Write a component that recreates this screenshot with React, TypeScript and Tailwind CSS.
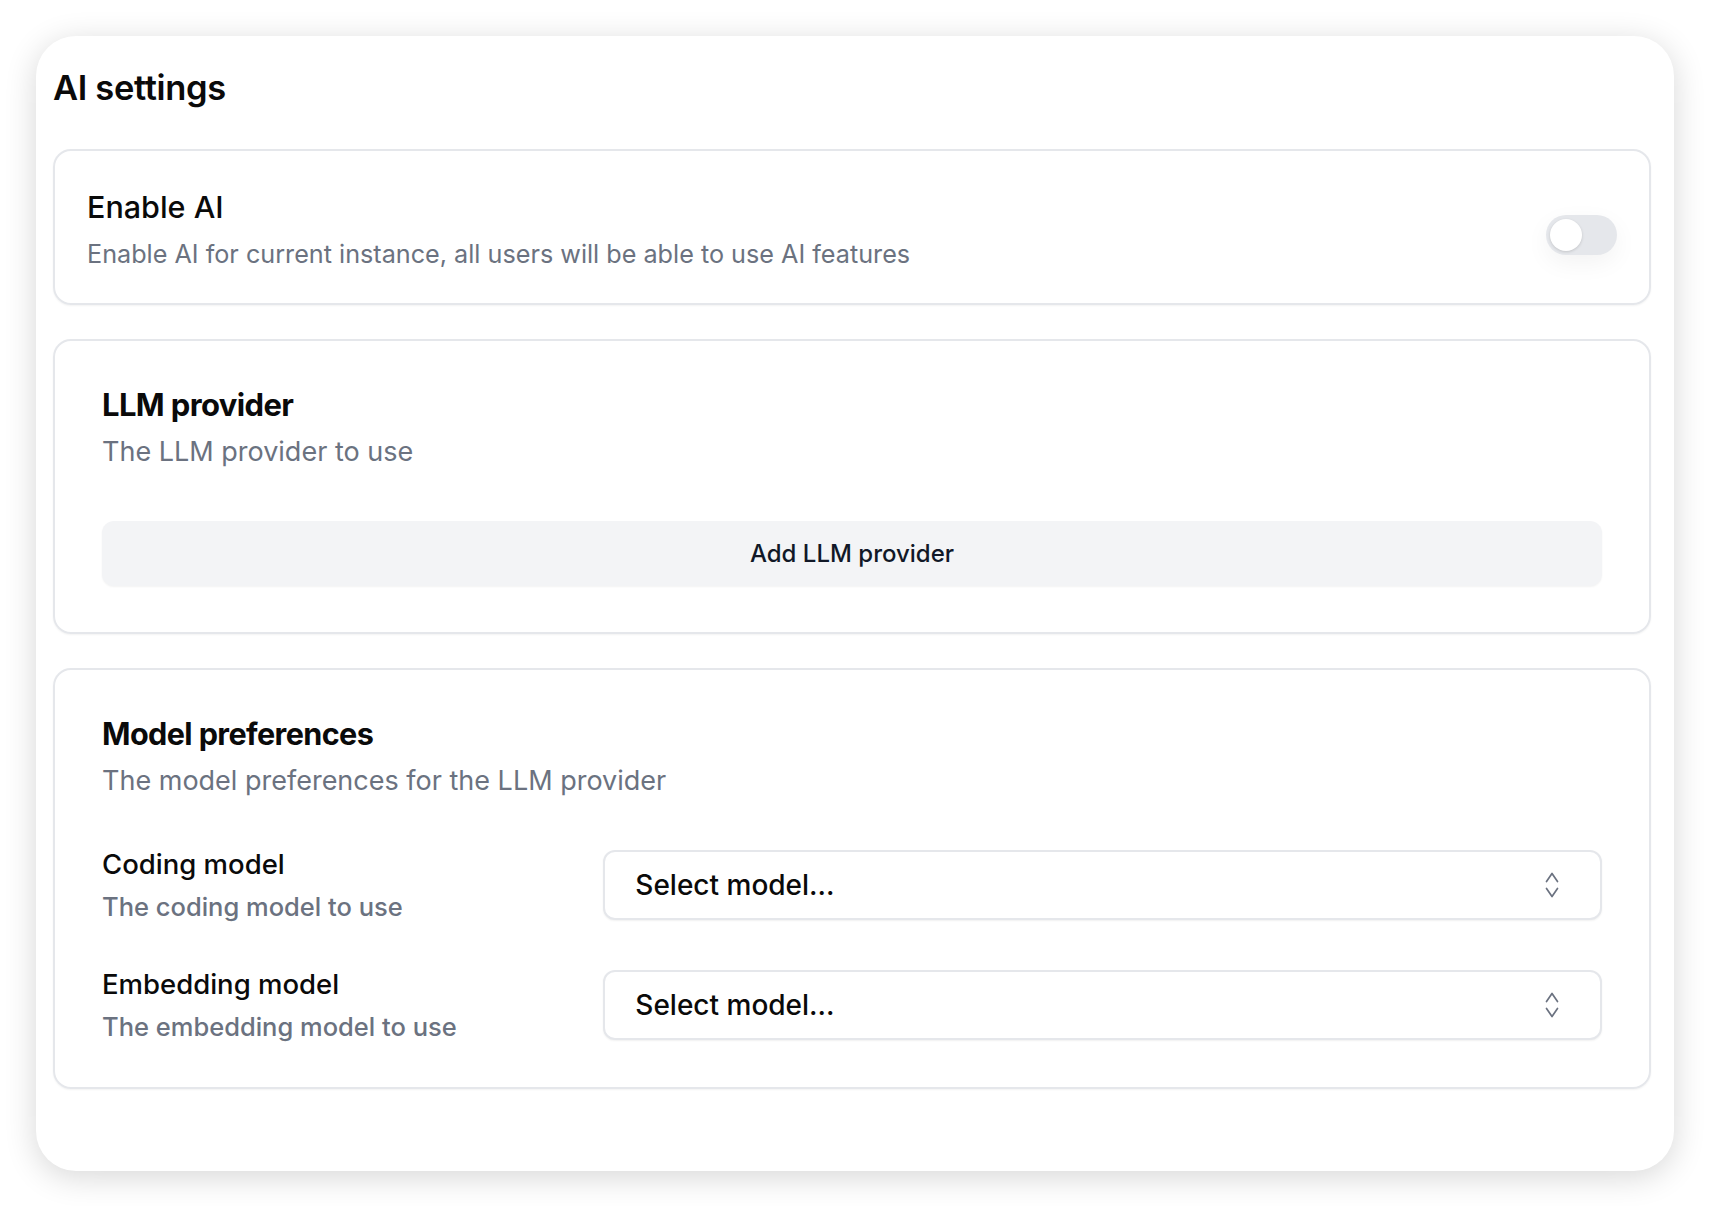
import React from "react";

function UpDown() {
    return (
        <svg width="16" height="28" viewBox="0 0 16 28" fill="none" stroke="#6b7280" strokeWidth="1.7" strokeLinecap="round" strokeLinejoin="round">
            <polyline points="2.5,10.5 8,2.5 13.5,10.5" />
            <polyline points="2.5,17.5 8,25.5 13.5,17.5" />
        </svg>
    );
}

function ModelRow({ label, hint }: { label: string; hint: string }) {
    return (
        <div className="grid grid-cols-3 gap-1 items-start">
            <div className="flex flex-col">
                <div className="text-[27.5px] leading-[28px] font-medium text-[#0a0a0a]">{label}</div>
                <div className="text-[25.5px] leading-[26px] font-medium text-[#6b7280] mt-[16px]">{hint}</div>
            </div>
            <button className="col-span-2 h-[70px] flex items-center justify-between pl-[30px] pr-[40px] bg-white border-2 border-[#e5e7eb] rounded-[12px] shadow-[0_1px_2px_rgba(0,0,0,0.06)]">
                <span className="text-[28px] font-medium text-[#0a0a0a]">Select model...</span>
                <UpDown />
            </button>
        </div>
    );
}

export default function App() {
    return (
        <div className="min-h-screen bg-white p-[36px] font-['Inter',sans-serif]">
            <div className="bg-white rounded-[40px] shadow-[0_6px_32px_rgba(0,0,0,0.16)] pl-[17px] pr-[23px] pt-[28px] pb-[82px]">
                <h1 className="text-[34.5px] leading-[48px] font-semibold text-[#0a0a0a] tracking-[-0.01em]">AI settings</h1>

                <div className="mt-[37px] flex flex-col gap-[34px]">
                    {/* Enable */}
                    <div className="border-2 border-[#e5e7eb] rounded-[18px] shadow-[0_1px_2px_rgba(0,0,0,0.05)] pl-[32px] pr-[32px] pt-[36px] pb-[32px] flex items-start justify-between">
                        <div>
                            <div className="text-[30.5px] leading-[40px] font-medium text-[#0a0a0a]">Enable AI</div>
                            <div className="text-[25.2px] leading-[34px] text-[#6b7280] mt-[10px]">Enable AI for current instance, all users will be able to use AI features</div>
                        </div>
                        <div className="w-[71px] h-[40px] rounded-full bg-[#e5e7eb] p-[4px] mt-[28px] shadow-[0_8px_24px_rgba(0,0,0,0.05)]">
                            <div className="w-[32px] h-[32px] rounded-full bg-white shadow-[0_1px_3px_rgba(0,0,0,0.15)]" />
                        </div>
                    </div>

                    {/* LLM provider */}
                    <div className="border-2 border-[#e5e7eb] rounded-[18px] shadow-[0_1px_2px_rgba(0,0,0,0.05)] px-[47px] pt-[44px] pb-[46px]">
                        <div className="text-[31px] leading-[40px] font-bold tracking-[-0.02em] text-[#0a0a0a]">LLM provider</div>
                        <div className="text-[27px] leading-[38px] text-[#6b7280] mt-[8px]">The LLM provider to use</div>
                        <button className="mt-[50px] w-full h-[65px] rounded-[12px] bg-[#f3f4f6] shadow-[0_1px_2px_rgba(0,0,0,0.05)] text-[24px] font-medium text-[#111827]">
                            Add LLM provider
                        </button>
                    </div>

                    {/* Model preferences */}
                    <div className="border-2 border-[#e5e7eb] rounded-[18px] shadow-[0_1px_2px_rgba(0,0,0,0.05)] px-[47px] pt-[44px] pb-[47px]">
                        <div className="text-[30.6px] leading-[40px] font-bold tracking-[-0.02em] text-[#0a0a0a]">Model preferences</div>
                        <div className="text-[27px] leading-[38px] text-[#6b7280] mt-[8px]">The model preferences for the LLM provider</div>
                        <div className="mt-[50px] flex flex-col gap-[50px]">
                            <ModelRow label="Coding model" hint="The coding model to use" />
                            <ModelRow label="Embedding model" hint="The embedding model to use" />
                        </div>
                    </div>
                </div>
            </div>
        </div>
    );
}
